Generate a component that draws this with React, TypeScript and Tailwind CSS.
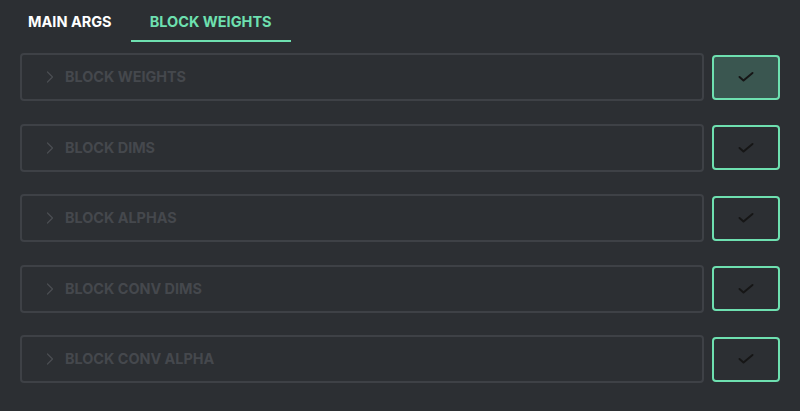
import React, { useState } from 'react';
import { ChevronRight } from 'lucide-react';

const sections = ['BLOCK WEIGHTS', 'BLOCK DIMS', 'BLOCK ALPHAS', 'BLOCK CONV DIMS', 'BLOCK CONV ALPHA'];

const CheckMark = () => (
    <svg width="18" height="12" viewBox="0 0 18 12" fill="none" stroke="#161616" strokeWidth="2" strokeLinecap="round" strokeLinejoin="round">
        <path d="M2.5 6 L6.5 9.5 L15.5 2" />
    </svg>
);

const App = () => {
    const [tab, setTab] = useState('BLOCK WEIGHTS');

    return (
        <div className="min-h-[411px] w-full bg-[#2c2f33] font-['Inter',sans-serif]">
            <div className="flex pl-[9px]">
                {['MAIN ARGS', 'BLOCK WEIGHTS'].map((t) => (
                    <button
                        key={t}
                        onClick={() => setTab(t)}
                        className={`px-[19px] pt-3 pb-2 text-[14.5px] leading-5 font-bold border-b-2 ${tab === t ? 'text-[#6ee0b0] border-[#6ee0b0]' : 'text-white border-transparent'}`}
                    >
                        {t}
                    </button>
                ))}
            </div>

            <div className="flex flex-col gap-[22.5px] px-5 pt-[11px]">
                {sections.map((s, i) => (
                    <div key={s} className="flex items-center gap-2">
                        <div className="flex h-12 flex-1 items-center gap-[5px] rounded-[4px] border-2 border-[#3e4146] pl-[18px]">
                            <ChevronRight size={20} strokeWidth={1.5} className="text-[#4a4d52]" />
                            <span className="text-[14.4px] font-bold text-[#45484d]">{s}</span>
                        </div>
                        <button className={`flex h-[45px] w-[68px] items-center justify-center rounded-[4px] border-2 border-[#6ee0b0] ${i === 0 ? 'bg-[#3a5650]' : 'bg-transparent'}`}>
                            <CheckMark />
                        </button>
                    </div>
                ))}
            </div>
        </div>
    );
};

export default App;
